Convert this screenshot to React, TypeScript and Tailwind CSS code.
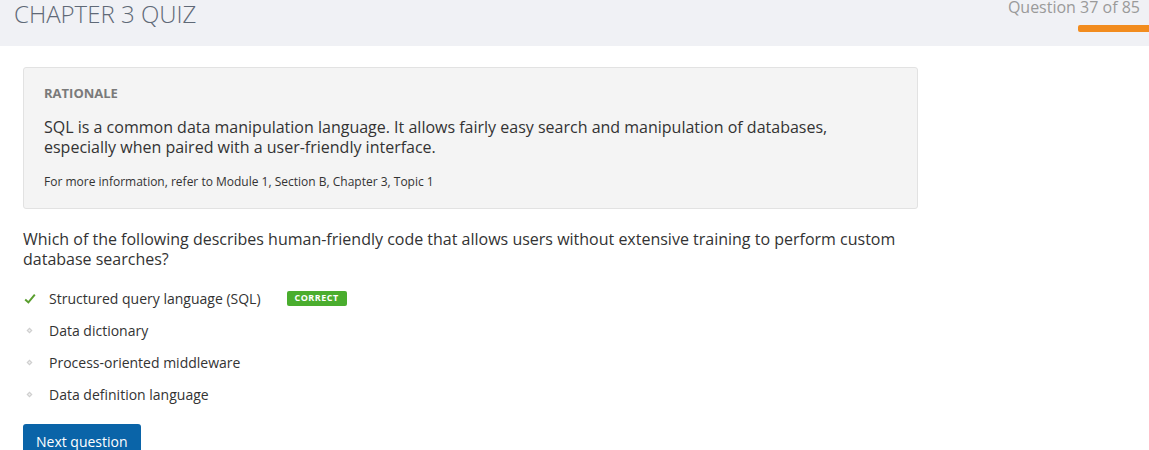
const options = [
  { label: "Structured query language (SQL)", correct: true },
  { label: "Data dictionary", correct: false },
  { label: "Process-oriented middleware", correct: false },
  { label: "Data definition language", correct: false },
];

function Check() {
  return (
    <svg width="12" height="11" viewBox="0 0 12 11" aria-hidden>
      <path d="M1.2 6.4 L4.4 9.4 L10.8 1.6" fill="none" stroke="#5a9e2f" strokeWidth="2" />
    </svg>
  );
}

function Diamond() {
  return (
    <svg width="7" height="7" viewBox="0 0 7 7" aria-hidden>
      <path d="M3.5 0.5 L6.5 3.5 L3.5 6.5 L0.5 3.5 Z" fill="#cfcfcf" />
      <path d="M3.5 2.2 L4.8 3.5 L3.5 4.8 L2.2 3.5 Z" fill="#f2f2f2" />
    </svg>
  );
}

export default function App() {
  return (
    <div className="h-[450px] overflow-hidden bg-white font-['Open_Sans',sans-serif]">
      <header className="flex h-[46px] justify-between bg-[#f0f1f5]">
        <h1 className="pl-[14px] pt-[1px] text-[24px] font-light leading-[26px] text-[#5f6977]">CHAPTER 3 QUIZ</h1>
        <div className="flex flex-col items-end">
          <div className="-mt-[3px] pr-[9px] text-[16px] leading-[20px] text-[#9a9a9a]">Question 37 of 85</div>
          <div className="mt-[8px] h-[7px] w-[71px] rounded-l-[2px] bg-[#f28c1e]" />
        </div>
      </header>

      <main className="px-[23px] pt-[21px]">
        <section className="w-[895px] rounded-[3px] border border-[#e2e2e2] bg-[#f4f4f4] px-[20px] pb-[18px] pt-[16px]">
          <h2 className="text-[13px] font-bold leading-[18px] text-[#7a7a7a]">RATIONALE</h2>
          <p className="mt-[15px] text-[16px] leading-[20px] text-[#333]">
            SQL is a common data manipulation language. It allows fairly easy search and manipulation of databases,
            especially when paired with a user-friendly interface.
          </p>
          <p className="mt-[17px] text-[12px] leading-[16px] text-[#333]">
            For more information, refer to Module 1, Section B, Chapter 3, Topic 1
          </p>
        </section>

        <p className="mt-[20px] w-[895px] text-[16px] leading-[20px] text-[#333]">
          Which of the following describes human-friendly code that allows users without extensive training to perform
          custom database searches?
        </p>

        <ul className="mt-[19px] flex flex-col gap-[12px]">
          {options.map((o) => (
            <li key={o.label} className="flex h-[20px] items-center text-[14px] text-[#333]">
              <span className="flex w-[26px] justify-start pl-[1px]">
                {o.correct ? <Check /> : <span className="pl-[2px]"><Diamond /></span>}
              </span>
              <span>{o.label}</span>
              {o.correct && (
                <span className="ml-[26px] flex h-[15px] w-[60px] items-center justify-center rounded-[2px] bg-[#4aad2e] text-[9px] font-bold tracking-[0.5px] text-white">
                  CORRECT
                </span>
              )}
            </li>
          ))}
        </ul>

        <button className="mt-[20px] h-[34px] rounded-[3px] bg-[#0a64a8] px-[13px] text-[14px] text-white">Next question</button>
      </main>
    </div>
  );
}
